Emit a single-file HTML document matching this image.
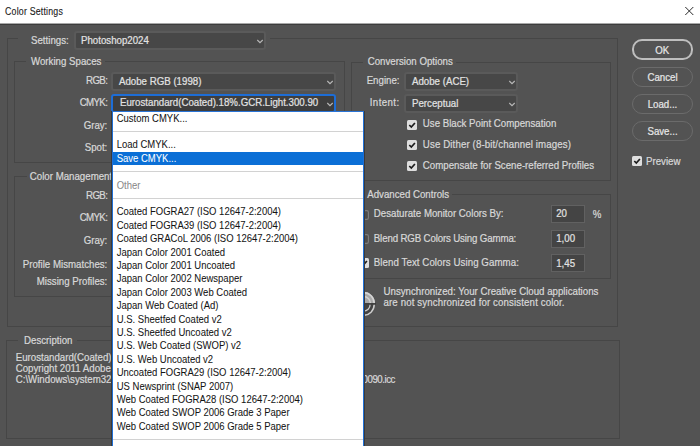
<!DOCTYPE html>
<html><head><meta charset="utf-8"><style>
html,body{margin:0;padding:0;}
body{width:700px;height:446px;position:relative;overflow:hidden;background:#535353;font-family:"Liberation Sans",sans-serif;}
.t{position:absolute;white-space:nowrap;line-height:12px;color:#d8d8d8;-webkit-text-stroke:0.2px currentColor;}
.r{position:absolute;}
</style></head><body>
<div class="r" style="left:0px;top:0px;width:700px;height:23px;background:#ffffff;"></div>
<div class="r" style="left:0px;top:23px;width:700px;height:1px;background:#a8a8a8;"></div>
<div class="r" style="left:0px;top:24px;width:700px;height:1px;background:#3d3d3d;"></div>
<div class="t" style="top:5.85px;font-size:8.8px;letter-spacing:0.2px;transform:scaleY(1.16);transform-origin:0 9.05px;left:5.00px;color:#202020;-webkit-text-stroke:0.1px #202020;">Color Settings</div>
<svg class="r" style="left:684px;top:6px" width="11" height="11" viewBox="0 0 11 11"><path d="M1.3 1 L9.3 9 M9.3 1 L1.3 9" stroke="#2a2a2a" stroke-width="1" fill="none"/></svg>
<div class="r" style="left:7px;top:38px;width:1px;height:289px;background:#464646;"></div>
<div class="r" style="left:617px;top:38px;width:1px;height:289px;background:#464646;"></div>
<div class="r" style="left:7px;top:326px;width:611px;height:1px;background:#464646;"></div>
<div class="r" style="left:7px;top:38px;width:11px;height:1px;background:#464646;"></div>
<div class="r" style="left:270px;top:38px;width:348px;height:1px;background:#464646;"></div>
<div class="t" style="top:35.09px;font-size:9.7px;letter-spacing:0px;transform:scaleY(1.12);transform-origin:0 9.36px;left:31.00px;color:#d8d8d8;">Settings:</div>
<div class="r" style="left:73.5px;top:31px;width:192.0px;height:19px;background:#474747;border:2px solid #5a5a5a;border-radius:3px;box-sizing:border-box;"></div>
<div class="t" style="top:35.29px;font-size:9.7px;letter-spacing:0px;transform:scaleY(1.12);transform-origin:0 9.36px;left:81.00px;color:#e2e2e2;">Photoshop2024</div>
<svg class="r" style="left:255.8px;top:38.0px" width="8" height="6" viewBox="0 0 8 6"><path d="M1.3 2 L4 4.6 L6.7 2" fill="none" stroke="#b8b8b8" stroke-width="1.15"/></svg>
<div class="r" style="left:14px;top:61px;width:1px;height:102px;background:#464646;"></div>
<div class="r" style="left:344px;top:61px;width:1px;height:102px;background:#464646;"></div>
<div class="r" style="left:14px;top:162px;width:331px;height:1px;background:#464646;"></div>
<div class="r" style="left:14px;top:61px;width:12px;height:1px;background:#464646;"></div>
<div class="r" style="left:105px;top:61px;width:240px;height:1px;background:#464646;"></div>
<div class="t" style="top:56.09px;font-size:9.7px;letter-spacing:0px;transform:scaleY(1.12);transform-origin:0 9.36px;left:31.00px;color:#d8d8d8;">Working Spaces</div>
<div class="t" style="top:75.29px;font-size:9.7px;letter-spacing:-0.6px;transform:scaleY(1.12);transform-origin:0 9.36px;right:592.70px;color:#d8d8d8;">RGB:</div>
<div class="t" style="top:97.39px;font-size:9.7px;letter-spacing:-0.6px;transform:scaleY(1.12);transform-origin:0 9.36px;right:592.70px;color:#d8d8d8;">CMYK:</div>
<div class="t" style="top:119.59px;font-size:9.7px;letter-spacing:0px;transform:scaleY(1.12);transform-origin:0 9.36px;right:592.70px;color:#d8d8d8;">Gray:</div>
<div class="t" style="top:141.79px;font-size:9.7px;letter-spacing:0px;transform:scaleY(1.12);transform-origin:0 9.36px;right:592.70px;color:#d8d8d8;">Spot:</div>
<div class="r" style="left:111px;top:72px;width:225px;height:19px;background:#474747;border:2px solid #5a5a5a;border-radius:3px;box-sizing:border-box;"></div>
<div class="t" style="top:75.99px;font-size:9.7px;letter-spacing:0px;transform:scaleY(1.12);transform-origin:0 9.36px;left:119.00px;color:#e2e2e2;">Adobe RGB (1998)</div>
<svg class="r" style="left:326.3px;top:79.0px" width="8" height="6" viewBox="0 0 8 6"><path d="M1.3 2 L4 4.6 L6.7 2" fill="none" stroke="#b8b8b8" stroke-width="1.15"/></svg>
<div class="r" style="left:111px;top:94.3px;width:225px;height:18.700000000000003px;background:#3e3e3e;border:2px solid #1d6dd6;border-radius:3px;box-sizing:border-box;"></div>
<div class="t" style="top:97.49px;font-size:9.7px;letter-spacing:0px;transform:scaleY(1.12);transform-origin:0 9.36px;left:120.00px;color:#e2e2e2;">Eurostandard(Coated).18%.GCR.Light.300.90</div>
<svg class="r" style="left:326.3px;top:101.15px" width="8" height="6" viewBox="0 0 8 6"><path d="M1.3 2 L4 4.6 L6.7 2" fill="none" stroke="#b8b8b8" stroke-width="1.15"/></svg>
<div class="r" style="left:14px;top:176px;width:1px;height:121px;background:#464646;"></div>
<div class="r" style="left:344px;top:176px;width:1px;height:121px;background:#464646;"></div>
<div class="r" style="left:14px;top:296px;width:331px;height:1px;background:#464646;"></div>
<div class="r" style="left:14px;top:176px;width:13px;height:1px;background:#464646;"></div>
<div class="r" style="left:116px;top:176px;width:229px;height:1px;background:#464646;"></div>
<div class="t" style="top:170.69px;font-size:9.7px;letter-spacing:0px;transform:scaleY(1.12);transform-origin:0 9.36px;left:29.80px;color:#d8d8d8;">Color Management</div>
<div class="t" style="top:189.59px;font-size:9.7px;letter-spacing:-0.6px;transform:scaleY(1.12);transform-origin:0 9.36px;right:592.70px;color:#d8d8d8;">RGB:</div>
<div class="t" style="top:212.09px;font-size:9.7px;letter-spacing:-0.6px;transform:scaleY(1.12);transform-origin:0 9.36px;right:592.70px;color:#d8d8d8;">CMYK:</div>
<div class="t" style="top:234.79px;font-size:9.7px;letter-spacing:0px;transform:scaleY(1.12);transform-origin:0 9.36px;right:592.70px;color:#d8d8d8;">Gray:</div>
<div class="t" style="top:258.69px;font-size:9.7px;letter-spacing:0px;transform:scaleY(1.12);transform-origin:0 9.36px;right:592.70px;color:#d8d8d8;">Profile Mismatches:</div>
<div class="t" style="top:275.69px;font-size:9.7px;letter-spacing:0px;transform:scaleY(1.12);transform-origin:0 9.36px;right:592.70px;color:#d8d8d8;">Missing Profiles:</div>
<div class="r" style="left:351px;top:62px;width:1px;height:119px;background:#464646;"></div>
<div class="r" style="left:610px;top:62px;width:1px;height:119px;background:#464646;"></div>
<div class="r" style="left:351px;top:180px;width:260px;height:1px;background:#464646;"></div>
<div class="r" style="left:351px;top:62px;width:12px;height:1px;background:#464646;"></div>
<div class="r" style="left:456px;top:62px;width:155px;height:1px;background:#464646;"></div>
<div class="t" style="top:56.09px;font-size:9.7px;letter-spacing:0px;transform:scaleY(1.12);transform-origin:0 9.36px;left:367.70px;color:#d8d8d8;">Conversion Options</div>
<div class="t" style="top:75.29px;font-size:9.7px;letter-spacing:0px;transform:scaleY(1.12);transform-origin:0 9.36px;right:300.50px;color:#d8d8d8;">Engine:</div>
<div class="t" style="top:97.29px;font-size:9.7px;letter-spacing:0.4px;transform:scaleY(1.12);transform-origin:0 9.36px;right:300.50px;color:#d8d8d8;">Intent:</div>
<div class="r" style="left:404px;top:72px;width:113.5px;height:19px;background:#474747;border:2px solid #5a5a5a;border-radius:3px;box-sizing:border-box;"></div>
<div class="t" style="top:75.59px;font-size:9.7px;letter-spacing:0px;transform:scaleY(1.12);transform-origin:0 9.36px;left:412.00px;color:#e2e2e2;">Adobe (ACE)</div>
<svg class="r" style="left:507.8px;top:79.0px" width="8" height="6" viewBox="0 0 8 6"><path d="M1.3 2 L4 4.6 L6.7 2" fill="none" stroke="#b8b8b8" stroke-width="1.15"/></svg>
<div class="r" style="left:404px;top:94px;width:113.5px;height:19px;background:#474747;border:2px solid #5a5a5a;border-radius:3px;box-sizing:border-box;"></div>
<div class="t" style="top:97.59px;font-size:9.7px;letter-spacing:0px;transform:scaleY(1.12);transform-origin:0 9.36px;left:412.00px;color:#e2e2e2;">Perceptual</div>
<svg class="r" style="left:507.8px;top:101.0px" width="8" height="6" viewBox="0 0 8 6"><path d="M1.3 2 L4 4.6 L6.7 2" fill="none" stroke="#b8b8b8" stroke-width="1.15"/></svg>
<svg class="r" style="left:407px;top:119.5px" width="10" height="10" viewBox="0 0 10 10"><rect x="0" y="0" width="10" height="10" rx="1.5" fill="#dedede"/><path d="M2.3 5 L4.3 7 L7.9 3" fill="none" stroke="#1c1c1c" stroke-width="1.7"/></svg>
<div class="t" style="top:118.39px;font-size:9.7px;letter-spacing:0px;transform:scaleY(1.12);transform-origin:0 9.36px;left:422.80px;color:#d8d8d8;">Use Black Point Compensation</div>
<svg class="r" style="left:407px;top:140px" width="10" height="10" viewBox="0 0 10 10"><rect x="0" y="0" width="10" height="10" rx="1.5" fill="#dedede"/><path d="M2.3 5 L4.3 7 L7.9 3" fill="none" stroke="#1c1c1c" stroke-width="1.7"/></svg>
<div class="t" style="top:138.79px;font-size:9.7px;letter-spacing:0.12px;transform:scaleY(1.12);transform-origin:0 9.36px;left:422.80px;color:#d8d8d8;">Use Dither (8-bit/channel images)</div>
<svg class="r" style="left:407px;top:160.5px" width="10" height="10" viewBox="0 0 10 10"><rect x="0" y="0" width="10" height="10" rx="1.5" fill="#dedede"/><path d="M2.3 5 L4.3 7 L7.9 3" fill="none" stroke="#1c1c1c" stroke-width="1.7"/></svg>
<div class="t" style="top:159.99px;font-size:9.7px;letter-spacing:0px;transform:scaleY(1.12);transform-origin:0 9.36px;left:422.80px;color:#d8d8d8;">Compensate for Scene-referred Profiles</div>
<div class="r" style="left:351px;top:194px;width:1px;height:85px;background:#464646;"></div>
<div class="r" style="left:610px;top:194px;width:1px;height:85px;background:#464646;"></div>
<div class="r" style="left:351px;top:278px;width:260px;height:1px;background:#464646;"></div>
<div class="r" style="left:351px;top:194px;width:12px;height:1px;background:#464646;"></div>
<div class="r" style="left:452px;top:194px;width:159px;height:1px;background:#464646;"></div>
<div class="t" style="top:188.59px;font-size:9.7px;letter-spacing:0px;transform:scaleY(1.12);transform-origin:0 9.36px;left:367.20px;color:#d8d8d8;">Advanced Controls</div>
<svg class="r" style="left:358.5px;top:209.5px" width="10" height="10" viewBox="0 0 10 10"><rect x="0.6" y="0.6" width="8.8" height="8.8" rx="1.6" fill="#4c4c4c" stroke="#7c7c7c" stroke-width="1.2"/></svg>
<div class="t" style="top:208.49px;font-size:9.7px;letter-spacing:0px;transform:scaleY(1.12);transform-origin:0 9.36px;left:373.80px;color:#d8d8d8;">Desaturate Monitor Colors By:</div>
<svg class="r" style="left:358.5px;top:233.5px" width="10" height="10" viewBox="0 0 10 10"><rect x="0.6" y="0.6" width="8.8" height="8.8" rx="1.6" fill="#4c4c4c" stroke="#7c7c7c" stroke-width="1.2"/></svg>
<div class="t" style="top:232.69px;font-size:9.7px;letter-spacing:-0.14px;transform:scaleY(1.12);transform-origin:0 9.36px;left:373.80px;color:#d8d8d8;">Blend RGB Colors Using Gamma:</div>
<svg class="r" style="left:358.5px;top:258px" width="10" height="10" viewBox="0 0 10 10"><rect x="0" y="0" width="10" height="10" rx="1.5" fill="#dedede"/><path d="M2.3 5 L4.3 7 L7.9 3" fill="none" stroke="#1c1c1c" stroke-width="1.7"/></svg>
<div class="t" style="top:257.09px;font-size:9.7px;letter-spacing:0.07px;transform:scaleY(1.12);transform-origin:0 9.36px;left:373.80px;color:#d8d8d8;">Blend Text Colors Using Gamma:</div>
<div class="r" style="left:551px;top:205px;width:34px;height:18px;background:#444444;border:1px solid #616161;box-sizing:border-box;"></div>
<div class="t" style="top:208.29px;font-size:9.7px;letter-spacing:0px;transform:scaleY(1.12);transform-origin:0 9.36px;left:556.20px;color:#e2e2e2;">20</div>
<div class="r" style="left:551px;top:230px;width:34px;height:18px;background:#444444;border:1px solid #616161;box-sizing:border-box;"></div>
<div class="t" style="top:233.29px;font-size:9.7px;letter-spacing:0px;transform:scaleY(1.12);transform-origin:0 9.36px;left:556.20px;color:#e2e2e2;">1,00</div>
<div class="r" style="left:551px;top:254.3px;width:34px;height:18px;background:#444444;border:1px solid #616161;box-sizing:border-box;"></div>
<div class="t" style="top:257.59px;font-size:9.7px;letter-spacing:0px;transform:scaleY(1.12);transform-origin:0 9.36px;left:556.20px;color:#e2e2e2;">1,45</div>
<div class="t" style="top:208.89px;font-size:9.7px;letter-spacing:0px;transform:scaleY(1.12);transform-origin:0 9.36px;left:592.80px;color:#d8d8d8;">%</div>
<svg class="r" style="left:351px;top:291px" width="25" height="25" viewBox="0 0 25 25">
<path d="M1 12.3 A11.5 11.5 0 0 1 24 12.3 Z" fill="#a9a9a9"/>
<path d="M1.8 12.3 A10.7 10.7 0 0 1 23.2 12.3" fill="none" stroke="#d4d4d4" stroke-width="1.6"/>
<path d="M5.6 12.3 A6.9 6.9 0 0 1 19.4 12.3" fill="none" stroke="#d0d0d0" stroke-width="1.5"/>
<path d="M1.8 13.6 A10.7 10.7 0 0 0 23.2 13.6" fill="#434343" stroke="#cdcdcd" stroke-width="1.5"/>
<path d="M5.9 13.6 A6.6 6.6 0 0 0 19.1 13.6" fill="none" stroke="#cdcdcd" stroke-width="1.3"/>
<rect x="0" y="12.2" width="25" height="1.3" fill="#363636"/>
</svg>
<div class="t" style="top:285.69px;font-size:9.7px;letter-spacing:0px;transform:scaleY(1.12);transform-origin:0 9.36px;left:383.50px;color:#d8d8d8;">Unsynchronized: Your Creative Cloud applications</div>
<div class="t" style="top:297.09px;font-size:9.7px;letter-spacing:0.12px;transform:scaleY(1.12);transform-origin:0 9.36px;left:383.50px;color:#d8d8d8;">are not synchronized for consistent color.</div>
<div class="r" style="left:631.5px;top:39px;width:61.5px;height:21px;border:2px solid #bebebe;border-radius:10px;box-sizing:border-box;"></div>
<div class="t" style="left:631.5px;width:61.5px;text-align:center;top:44.64px;font-size:9.7px;color:#e6e6e6;transform:scaleY(1.14);transform-origin:0 9.36px">OK</div>
<div class="r" style="left:632px;top:67px;width:61px;height:19.5px;border:1px solid #6b6b6b;border-radius:10px;box-sizing:border-box;"></div>
<div class="t" style="left:632px;width:61px;text-align:center;top:71.84px;font-size:9.7px;color:#e6e6e6;transform:scaleY(1.14);transform-origin:0 9.36px">Cancel</div>
<div class="r" style="left:632px;top:94px;width:61px;height:19.5px;border:1px solid #6b6b6b;border-radius:10px;box-sizing:border-box;"></div>
<div class="t" style="left:632px;width:61px;text-align:center;top:98.84px;font-size:9.7px;color:#e6e6e6;transform:scaleY(1.14);transform-origin:0 9.36px">Load...</div>
<div class="r" style="left:632px;top:121px;width:61px;height:19.5px;border:1px solid #6b6b6b;border-radius:10px;box-sizing:border-box;"></div>
<div class="t" style="left:632px;width:61px;text-align:center;top:125.84px;font-size:9.7px;color:#e6e6e6;transform:scaleY(1.14);transform-origin:0 9.36px">Save...</div>
<svg class="r" style="left:631.5px;top:155.5px" width="10" height="10" viewBox="0 0 10 10"><rect x="0" y="0" width="10" height="10" rx="1.5" fill="#dedede"/><path d="M2.3 5 L4.3 7 L7.9 3" fill="none" stroke="#1c1c1c" stroke-width="1.7"/></svg>
<div class="t" style="top:155.59px;font-size:9.7px;letter-spacing:0px;transform:scaleY(1.12);transform-origin:0 9.36px;left:646.00px;color:#d8d8d8;">Preview</div>
<div class="r" style="left:6px;top:340px;width:1px;height:99px;background:#464646;"></div>
<div class="r" style="left:619px;top:340px;width:1px;height:99px;background:#464646;"></div>
<div class="r" style="left:6px;top:438px;width:614px;height:1px;background:#464646;"></div>
<div class="r" style="left:6px;top:340px;width:12px;height:1px;background:#464646;"></div>
<div class="r" style="left:77px;top:340px;width:543px;height:1px;background:#464646;"></div>
<div class="t" style="top:335.19px;font-size:9.7px;letter-spacing:0px;transform:scaleY(1.12);transform-origin:0 9.36px;left:24.00px;color:#d8d8d8;">Description</div>
<div class="t" style="top:351.69px;font-size:9.7px;letter-spacing:0px;transform:scaleY(1.12);transform-origin:0 9.36px;left:15.70px;color:#d8d8d8;">Eurostandard(Coated).18%.GCR.Light.300.90 (Coated)</div>
<div class="t" style="top:362.69px;font-size:9.7px;letter-spacing:0px;transform:scaleY(1.12);transform-origin:0 9.36px;left:15.70px;color:#d8d8d8;">Copyright 2011 Adobe Systems Incorporated</div>
<div class="r" style="left:15px;top:370px;width:97px;height:16px;overflow:hidden">
<div class="t" style="top:3.89px;font-size:9.7px;letter-spacing:0px;transform:scaleY(1.12);transform-origin:0 9.36px;left:0.70px;color:#d8d8d8;">C:\Windows\system32\spool\drivers\color\Eurostandard</div>
</div>
<div class="r" style="left:364px;top:370px;width:40px;height:16px;overflow:hidden">
<div class="t" style="top:3.89px;font-size:9.7px;letter-spacing:-0.45px;transform:scaleY(1.05);transform-origin:0 9.36px;right:9.00px;color:#d8d8d8;">L.300.90090.icc</div>
</div>
<div class="r" style="left:112px;top:111px;width:252px;height:335px;background:#ffffff;border-left:1px solid #1f6fd6;border-right:1px solid #1f6fd6;border-top:1px solid #2a74d6;box-sizing:border-box;box-shadow:-1px 0 0 #3a3a3a, 1px 0 0 #3a3a3a;"></div>
<div class="t" style="top:112.70px;font-size:9.5px;letter-spacing:0px;transform:scaleY(1.15);transform-origin:0 9.29px;left:116.70px;color:#141414;-webkit-text-stroke:0.04px currentColor;">Custom CMYK...</div>
<div class="r" style="left:113px;top:130.99px;width:250px;height:1px;background:#d2d2d2;"></div>
<div class="t" style="top:139.48px;font-size:9.5px;letter-spacing:0px;transform:scaleY(1.15);transform-origin:0 9.29px;left:116.70px;color:#141414;-webkit-text-stroke:0.04px currentColor;">Load CMYK...</div>
<div class="r" style="left:113px;top:152.47px;width:250px;height:12.3px;background:#0b6fd6;"></div>
<div class="t" style="top:152.87px;font-size:9.5px;letter-spacing:0px;transform:scaleY(1.15);transform-origin:0 9.29px;left:116.70px;color:#ffffff;-webkit-text-stroke:0.04px currentColor;">Save CMYK...</div>
<div class="r" style="left:113px;top:171.16px;width:250px;height:1px;background:#d2d2d2;"></div>
<div class="t" style="top:179.65px;font-size:9.5px;letter-spacing:0px;transform:scaleY(1.15);transform-origin:0 9.29px;left:116.70px;color:#8a8a8a;-webkit-text-stroke:0.04px currentColor;">Other</div>
<div class="r" style="left:113px;top:197.94px;width:250px;height:1px;background:#d2d2d2;"></div>
<div class="t" style="top:206.43px;font-size:9.5px;letter-spacing:0px;transform:scaleY(1.15);transform-origin:0 9.29px;left:116.70px;color:#141414;-webkit-text-stroke:0.04px currentColor;">Coated FOGRA27 (ISO 12647-2:2004)</div>
<div class="t" style="top:219.82px;font-size:9.5px;letter-spacing:0px;transform:scaleY(1.15);transform-origin:0 9.29px;left:116.70px;color:#141414;-webkit-text-stroke:0.04px currentColor;">Coated FOGRA39 (ISO 12647-2:2004)</div>
<div class="t" style="top:233.21px;font-size:9.5px;letter-spacing:0px;transform:scaleY(1.15);transform-origin:0 9.29px;left:116.70px;color:#141414;-webkit-text-stroke:0.04px currentColor;">Coated GRACoL 2006 (ISO 12647-2:2004)</div>
<div class="t" style="top:246.60px;font-size:9.5px;letter-spacing:0px;transform:scaleY(1.15);transform-origin:0 9.29px;left:116.70px;color:#141414;-webkit-text-stroke:0.04px currentColor;">Japan Color 2001 Coated</div>
<div class="t" style="top:259.99px;font-size:9.5px;letter-spacing:0px;transform:scaleY(1.15);transform-origin:0 9.29px;left:116.70px;color:#141414;-webkit-text-stroke:0.04px currentColor;">Japan Color 2001 Uncoated</div>
<div class="t" style="top:273.38px;font-size:9.5px;letter-spacing:0px;transform:scaleY(1.15);transform-origin:0 9.29px;left:116.70px;color:#141414;-webkit-text-stroke:0.04px currentColor;">Japan Color 2002 Newspaper</div>
<div class="t" style="top:286.77px;font-size:9.5px;letter-spacing:0px;transform:scaleY(1.15);transform-origin:0 9.29px;left:116.70px;color:#141414;-webkit-text-stroke:0.04px currentColor;">Japan Color 2003 Web Coated</div>
<div class="t" style="top:300.16px;font-size:9.5px;letter-spacing:0px;transform:scaleY(1.15);transform-origin:0 9.29px;left:116.70px;color:#141414;-webkit-text-stroke:0.04px currentColor;">Japan Web Coated (Ad)</div>
<div class="t" style="top:313.55px;font-size:9.5px;letter-spacing:0px;transform:scaleY(1.15);transform-origin:0 9.29px;left:116.70px;color:#141414;-webkit-text-stroke:0.04px currentColor;">U.S. Sheetfed Coated v2</div>
<div class="t" style="top:326.94px;font-size:9.5px;letter-spacing:0px;transform:scaleY(1.15);transform-origin:0 9.29px;left:116.70px;color:#141414;-webkit-text-stroke:0.04px currentColor;">U.S. Sheetfed Uncoated v2</div>
<div class="t" style="top:340.33px;font-size:9.5px;letter-spacing:0px;transform:scaleY(1.15);transform-origin:0 9.29px;left:116.70px;color:#141414;-webkit-text-stroke:0.04px currentColor;">U.S. Web Coated (SWOP) v2</div>
<div class="t" style="top:353.72px;font-size:9.5px;letter-spacing:0px;transform:scaleY(1.15);transform-origin:0 9.29px;left:116.70px;color:#141414;-webkit-text-stroke:0.04px currentColor;">U.S. Web Uncoated v2</div>
<div class="t" style="top:367.11px;font-size:9.5px;letter-spacing:0px;transform:scaleY(1.15);transform-origin:0 9.29px;left:116.70px;color:#141414;-webkit-text-stroke:0.04px currentColor;">Uncoated FOGRA29 (ISO 12647-2:2004)</div>
<div class="t" style="top:380.50px;font-size:9.5px;letter-spacing:0px;transform:scaleY(1.15);transform-origin:0 9.29px;left:116.70px;color:#141414;-webkit-text-stroke:0.04px currentColor;">US Newsprint (SNAP 2007)</div>
<div class="t" style="top:393.89px;font-size:9.5px;letter-spacing:0px;transform:scaleY(1.15);transform-origin:0 9.29px;left:116.70px;color:#141414;-webkit-text-stroke:0.04px currentColor;">Web Coated FOGRA28 (ISO 12647-2:2004)</div>
<div class="t" style="top:407.28px;font-size:9.5px;letter-spacing:0px;transform:scaleY(1.15);transform-origin:0 9.29px;left:116.70px;color:#141414;-webkit-text-stroke:0.04px currentColor;">Web Coated SWOP 2006 Grade 3 Paper</div>
<div class="t" style="top:420.67px;font-size:9.5px;letter-spacing:0px;transform:scaleY(1.15);transform-origin:0 9.29px;left:116.70px;color:#141414;-webkit-text-stroke:0.04px currentColor;">Web Coated SWOP 2006 Grade 5 Paper</div>
<div class="r" style="left:113px;top:438.95px;width:250px;height:1px;background:#d2d2d2;"></div>
<div class="t" style="top:447.45px;font-size:9.5px;letter-spacing:0px;transform:scaleY(1.15);transform-origin:0 9.29px;left:116.70px;color:#141414;-webkit-text-stroke:0.04px currentColor;">Web Uncoated v2</div>
</body></html>
